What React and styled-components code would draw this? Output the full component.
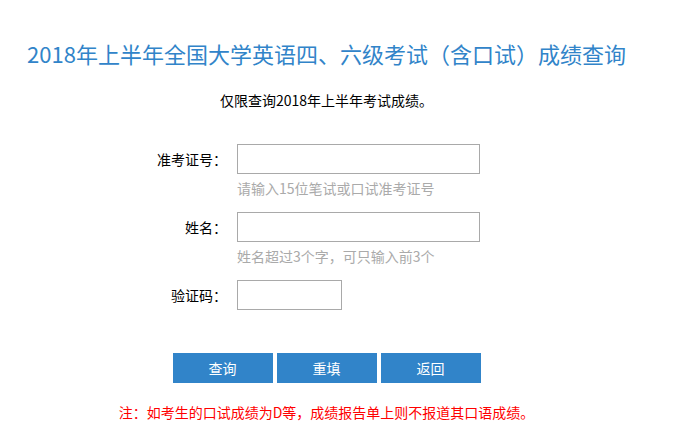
import styled, { createGlobalStyle } from "styled-components";

const GlobalStyle = createGlobalStyle`
  body {
    margin: 0;
    background: #fff;
    font-family: "Noto Sans CJK SC", "Microsoft YaHei", sans-serif;
    font-size: 14px;
    color: #000;
  }
`;

const Page = styled.div`
  width: 653px;
  padding-top: 38px;
  text-align: center;
`;

const Title = styled.h1`
  margin: 0;
  font-size: 22px;
  font-weight: normal;
  line-height: 30px;
  color: #3184c9;
`;

const Subtitle = styled.p`
  margin: 22px 0 0;
  line-height: 20px;
`;

const Form = styled.form`
  margin-top: 34px;
  display: flex;
  flex-direction: column;
  gap: 14px;
  text-align: left;
`;

const Row = styled.div`
  display: grid;
  grid-template-columns: 90px auto;
  column-gap: 10px;
  margin-left: 137px;
`;

const Label = styled.label`
  text-align: right;
  line-height: 30px;
`;

const Input = styled.input`
  box-sizing: border-box;
  width: ${(p) => p.$width}px;
  height: 30px;
  margin: 0;
  border: 1px solid #a9a9a9;
  outline: none;
  font: inherit;
`;

const Hint = styled.div`
  grid-column: 2;
  margin-top: 4px;
  line-height: 20px;
  color: #aaa;
`;

const Buttons = styled.div`
  margin-top: 43px;
  display: flex;
  justify-content: center;
  gap: 4px;
`;

const Button = styled.button`
  width: 100px;
  height: 30px;
  border: none;
  background: #3184c9;
  color: #fff;
  font: inherit;
  cursor: pointer;
`;

const Note = styled.p`
  margin: 19px 0 0;
  line-height: 20px;
  color: #f00;
`;

const fields = [
  { label: "准考证号：", width: 243, hint: "请输入15位笔试或口试准考证号" },
  { label: "姓名：", width: 243, hint: "姓名超过3个字，可只输入前3个" },
  { label: "验证码：", width: 105 },
];

export default function App() {
  return (
    <>
      <GlobalStyle />
      <Page>
        <Title>2018年上半年全国大学英语四、六级考试（含口试）成绩查询</Title>
        <Subtitle>仅限查询2018年上半年考试成绩。</Subtitle>
        <Form onSubmit={(e) => e.preventDefault()}>
          {fields.map((f) => (
            <Row key={f.label}>
              <Label>{f.label}</Label>
              <Input type="text" $width={f.width} />
              {f.hint && <Hint>{f.hint}</Hint>}
            </Row>
          ))}
        </Form>
        <Buttons>
          <Button type="button">查询</Button>
          <Button type="button">重填</Button>
          <Button type="button">返回</Button>
        </Buttons>
        <Note>注：如考生的口试成绩为D等，成绩报告单上则不报道其口语成绩。</Note>
      </Page>
    </>
  );
}
